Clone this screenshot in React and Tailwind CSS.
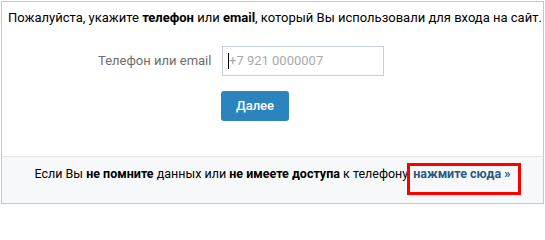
export default function App() {
  return (
    <div className="w-[545px] h-[205px] bg-white p-px overflow-hidden" style={{ fontFamily: 'Roboto, "Noto Sans", sans-serif' }}>
      <div className="relative w-[543px] h-[203px] border border-[#c5c8cc] flex flex-col">
        <div className="pt-[7px] pl-[6px] text-[13px] leading-[18px] text-black whitespace-nowrap">
          Пожалуйста, укажите <b className="font-bold">телефон</b> или <b className="font-bold">email</b>, который Вы использовали для входа на сайт.
        </div>
        <div className="flex items-center mt-[19px] pl-[96px]">
          <div className="text-[13px] leading-[18px] text-[#6d6d6d] w-[124px] whitespace-nowrap">Телефон или email</div>
          <div className="w-[162px] h-[30px] border border-[#c5cdd6] flex items-center pl-[5px]">
            <span className="w-px h-[16px] bg-black"></span>
            <span className="text-[13px] text-[#aaaaaa] leading-[18px]">+7 921 0000007</span>
          </div>
        </div>
        <div className="mt-[15px] pl-[219px]">
          <div className="w-[68px] h-[30px] rounded-[3px] bg-[#2c84bf] text-white text-[13px] font-medium flex items-center justify-center">
            Далее
          </div>
        </div>
        <div className="mt-auto h-[47px] bg-[#f7f8fa] border-t border-[#e4e6ea] pt-[8px] text-center text-[12.5px] leading-[18px] text-black whitespace-nowrap">
          Если Вы <b className="font-bold">не помните</b> данных или <b className="font-bold">не имеете доступа</b> к телефону, <span className="font-bold text-[#2a5885]">нажмите сюда »</span>
        </div>
        <div className="absolute left-[405px] top-[161px] w-[114px] h-[32px] border-[3px] border-[#ff0000]"></div>
      </div>
    </div>
  );
}
